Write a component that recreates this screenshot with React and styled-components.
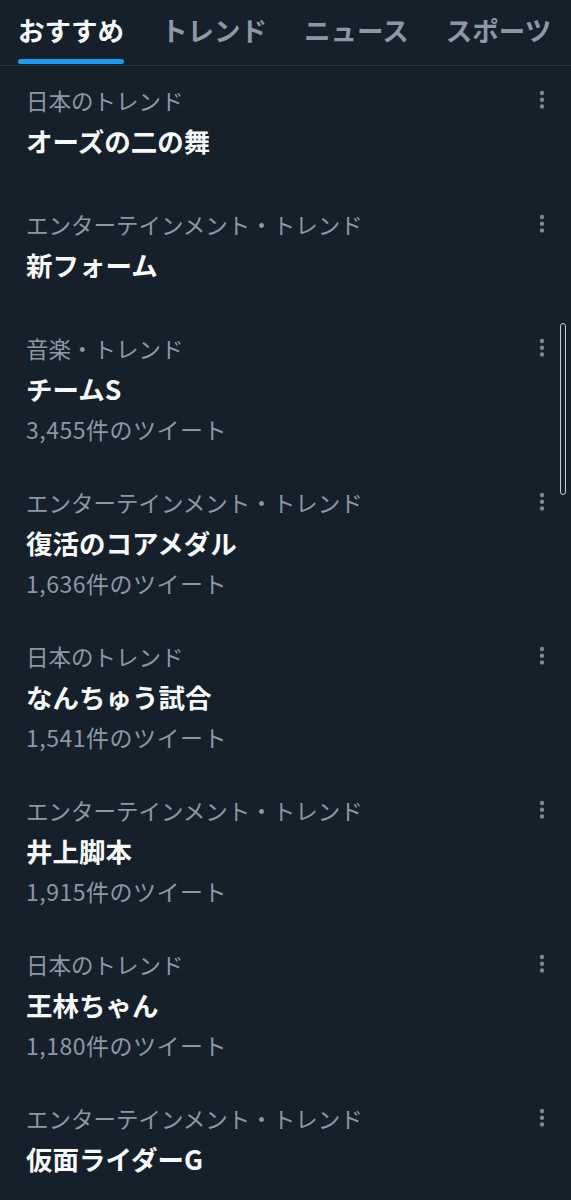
import React from "react";
import styled, { createGlobalStyle } from "styled-components";

const Global = createGlobalStyle`
  html, body { margin: 0; padding: 0; background: #15202b; }
  body { font-family: "Noto Sans CJK JP", "Noto Sans", sans-serif; }
`;

const Page = styled.div`
  position: relative;
  width: 571px;
  height: 1200px;
  overflow: hidden;
  background: #15202b;
`;

const TabBar = styled.div`
  display: flex;
  gap: 37px;
  height: 65px;
  padding-left: 18px;
  border-bottom: 1px solid #2a3540;
`;

const Tab = styled.div`
  display: flex;
  flex-direction: column;
  justify-content: space-between;
  align-items: stretch;
  padding-top: 14px;
  box-sizing: border-box;
  height: 65px;
`;

const TabLabel = styled.span`
  font-size: 26.5px;
  line-height: 32px;
  font-weight: 700;
  white-space: nowrap;
  color: ${(p) => (p.$active ? "#f7f9f9" : "#8b98a5")};
`;

const Indicator = styled.div`
  height: 5px;
  margin-bottom: 1px;
  border-radius: 3px;
  background: ${(p) => (p.$active ? "#1d9bf0" : "transparent")};
`;

const List = styled.div`
  display: flex;
  flex-direction: column;
`;

const Item = styled.div`
  display: grid;
  grid-template-columns: 1fr 20px;
  padding: 19px 19px 31px 26px;
`;

const Content = styled.div`
  display: flex;
  flex-direction: column;
`;

const Category = styled.div`
  font-size: 22.5px;
  line-height: 30px;
  color: #8b98a5;
  white-space: nowrap;
`;

const Title = styled.div`
  margin-top: 8px;
  font-size: 26.5px;
  line-height: 36px;
  font-weight: 700;
  color: #f7f9f9;
  white-space: nowrap;
`;

const Count = styled.div`
  margin-top: 14px;
  font-size: 23px;
  line-height: 16px;
  letter-spacing: 0.5px;
  color: #8b98a5;
  white-space: nowrap;
`;

const MenuBtn = styled.div`
  height: 30px;
  display: flex;
  align-items: center;
  justify-content: center;
`;

const ScrollThumb = styled.div`
  position: absolute;
  left: 560px;
  top: 323px;
  width: 6px;
  height: 172px;
  box-sizing: border-box;
  border: 1.5px solid #c9ced3;
  border-radius: 4px;
  background: #15202b;
`;

const Dots = () => (
  <svg width="8" height="22" viewBox="0 0 8 22">
    <circle cx="4" cy="4" r="2.2" fill="#7d8893" />
    <circle cx="4" cy="10.7" r="2.2" fill="#7d8893" />
    <circle cx="4" cy="17.4" r="2.2" fill="#7d8893" />
  </svg>
);

const tabs = ["おすすめ", "トレンド", "ニュース", "スポーツ"];

const trends = [
  { cat: "日本のトレンド", title: "オーズの二の舞" },
  { cat: "エンターテインメント・トレンド", title: "新フォーム" },
  { cat: "音楽・トレンド", title: "チームS", count: "3,455件のツイート" },
  { cat: "エンターテインメント・トレンド", title: "復活のコアメダル", count: "1,636件のツイート" },
  { cat: "日本のトレンド", title: "なんちゅう試合", count: "1,541件のツイート" },
  { cat: "エンターテインメント・トレンド", title: "井上脚本", count: "1,915件のツイート" },
  { cat: "日本のトレンド", title: "王林ちゃん", count: "1,180件のツイート" },
  { cat: "エンターテインメント・トレンド", title: "仮面ライダーG" },
];

export default function App() {
  return (
    <Page>
      <Global />
      <TabBar>
        {tabs.map((t, i) => (
          <Tab key={t}>
            <TabLabel $active={i === 0}>{t}</TabLabel>
            <Indicator $active={i === 0} />
          </Tab>
        ))}
      </TabBar>
      <List>
        {trends.map((t, i) => (
          <Item key={i}>
            <Content>
              <Category>{t.cat}</Category>
              <Title>{t.title}</Title>
              {t.count && <Count>{t.count}</Count>}
            </Content>
            <MenuBtn>
              <Dots />
            </MenuBtn>
          </Item>
        ))}
      </List>
      <ScrollThumb />
    </Page>
  );
}
